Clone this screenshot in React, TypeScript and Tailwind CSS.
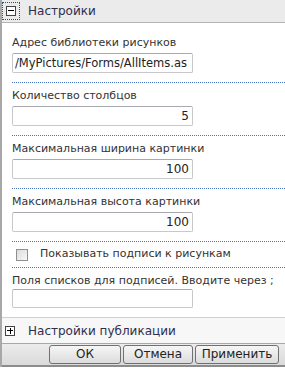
import React from 'react'

const font = { fontFamily: '"DejaVu Sans", Verdana, sans-serif' }

interface FieldProps {
  label: string
  value: string
  align?: 'left' | 'right'
}

const Field: React.FC<FieldProps> = ({ label, value, align = 'right' }) => (
  <div className="border-b border-dotted border-[#4a72c8] pt-[6px] pb-[9px]">
    <div className="h-[13px] leading-[13px] whitespace-nowrap text-[#333]">{label}</div>
    <div
      className={`mt-[4px] h-[20px] w-[181px] overflow-hidden whitespace-nowrap rounded-[2px] border border-[#c8c8cc] border-t-[#a8a8b0] bg-white leading-[18px] text-[#222] ${
        align === 'right' ? 'px-[3px] text-right text-[12px]' : 'px-[2px] text-left text-[11.5px]'
      }`}
    >
      {value}
    </div>
  </div>
)

const Expander: React.FC<{ open: boolean }> = ({ open }) => (
  <span className="relative inline-block h-[10px] w-[10px] border border-[#444] bg-white">
    <span className="absolute left-[1px] top-[3px] h-[1px] w-[6px] bg-black" />
    {!open && <span className="absolute left-[3.5px] top-[1px] h-[6px] w-[1px] bg-black" />}
  </span>
)

const Button: React.FC<{ children: React.ReactNode; className?: string }> = ({ children, className }) => (
  <button
    className={`h-[19px] rounded-[3px] border border-[#707070] bg-gradient-to-b from-[#f6f6f6] to-[#dcdcdc] text-[12px] leading-[17px] text-[#222] ${className ?? ''}`}
    style={font}
  >
    {children}
  </button>
)

export default function App() {
  return (
    <div className="h-[370px] w-[285px] bg-white text-[11px]" style={font}>
      <div className="flex h-[367px] flex-col border-l-2 border-[#a8a8a8]">
        {/* заголовок раздела */}
        <div className="flex h-[23px] items-center border-b border-[#b4b4b4] bg-[#ebebeb]">
          <span className="flex h-[18px] w-[18px] items-center justify-center outline-1 outline-dotted outline-[#2a4fa8] -outline-offset-1">
            <Expander open />
          </span>
          <span className="ml-[8px] text-[12px] text-[#2e2e4e]">Настройки</span>
        </div>

        <div className="pl-[10px]">
          <div className="pt-[7px]" />
          <Field label="Адрес библиотеки рисунков" value="/MyPictures/Forms/AllItems.as" align="left" />
          <Field label="Количество столбцов" value="5" />
          <Field label="Максимальная ширина картинки" value="100" />
          <Field label="Максимальная высота картинки" value="100" />
          <div className="flex h-[26px] items-center border-b border-dotted border-[#4a72c8]">
            <span className="ml-[4px] h-[12px] w-[12px] border border-[#8e8f8f] bg-gradient-to-br from-[#dcdcdc] to-[#f8f8f8]" />
            <span className="ml-[12px] text-[#333]">Показывать подписи к рисункам</span>
          </div>
          <div className="pt-[6px] pb-[9px]">
            <div className="h-[13px] leading-[13px] whitespace-nowrap text-[#333]">
              Поля списков для подписей. Вводите через ;
            </div>
            <div className="mt-[2px] h-[19px] w-[181px] rounded-[2px] border border-[#c8c8cc] border-t-[#a8a8b0] bg-white" />
          </div>
        </div>

        <div className="flex h-[26px] items-center border-t border-[#d0d0d0] bg-[#f7f7f7] pl-[3px]">
          <Expander open={false} />
          <span className="ml-[13px] text-[12px] text-[#2e2e4e]">Настройки публикации</span>
        </div>

        <div className="flex flex-1 items-center justify-end gap-[2px] border-t border-[#a8a8a8] border-b-2 border-b-[#8c8c8c] bg-gradient-to-b from-[#ececec] to-[#dadada] pr-[6px]">
          <Button className="w-[72px]">ОК</Button>
          <Button className="w-[70px]">Отмена</Button>
          <Button className="w-[84px]">Применить</Button>
        </div>
      </div>
    </div>
  )
}
